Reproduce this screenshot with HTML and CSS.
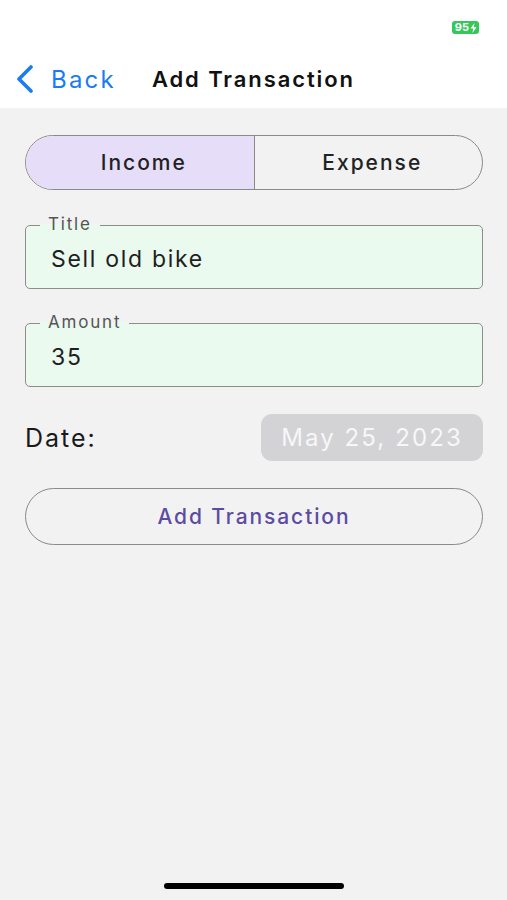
FILE: index.html
```html
<!DOCTYPE html>
<html>
<head>
  <meta charset="utf-8" />
  <title>Add Transaction</title>
  <link rel="stylesheet" href="styles.css">
</head>
<body>
  <div class="topbar">
    <div class="status">
      <span class="battery">95<svg width="7" height="10" viewBox="0 0 7 10"><path d="M4.5 0 L0.5 5.6 H3.2 L2.4 10 L6.5 4.2 H3.8 Z" fill="#fff"/></svg></span>
    </div>
    <div class="nav">
      <a class="back">
        <svg width="22" height="28" viewBox="0 0 22 28"><path d="M17 2 L5 14 L17 26" fill="none" stroke="#1a7cf0" stroke-width="3.6" stroke-linecap="round" stroke-linejoin="round"/></svg>
        <span>Back</span>
      </a>
      <span class="nav-title">Add Transaction</span>
    </div>
  </div>

  <div class="content">
    <div class="segment">
      <div class="seg-item active">Income</div>
      <div class="seg-item">Expense</div>
    </div>

    <div class="field">
      <span class="field-label">Title</span>
      <span class="field-value">Sell old bike</span>
    </div>

    <div class="field">
      <span class="field-label">Amount</span>
      <span class="field-value">35</span>
    </div>

    <div class="date-row">
      <span class="date-label">Date:</span>
      <span class="date-pill">May 25, 2023</span>
    </div>

    <button class="add-btn">Add Transaction</button>
  </div>

  <div class="home-bar"></div>
</body>
</html>
```

FILE: styles.css
```css
body {
  margin: 0;
  width: 507px;
  height: 900px;
  background-color: #f2f2f2;
  font-family: Inter, "Noto Sans", sans-serif;
  color: #1c1c1c;
  position: relative;
  overflow: hidden;
}

.topbar {
  background-color: #fff;
  height: 108px;
}

.status {
  height: 50px;
  display: flex;
  justify-content: flex-end;
  align-items: flex-start;
  padding-right: 28px;
}

.battery {
  margin-top: 21px;
  background-color: #34c759;
  color: #fff;
  font-size: 11px;
  font-weight: 700;
  line-height: 13px;
  height: 13px;
  padding: 0 2px 0 3px;
  border-radius: 3px;
  display: flex;
  align-items: center;
  gap: 1px;
}

.nav {
  display: flex;
  align-items: center;
  height: 58px;
  padding-left: 14px;
}

.back {
  display: flex;
  align-items: center;
  color: #1a7cf0;
  font-size: 24px;
  letter-spacing: 2.2px;
  gap: 15px;
}

.nav-title {
  margin-left: 36px;
  font-size: 22px;
  font-weight: 600;
  letter-spacing: 1.9px;
  color: #111;
}

.content {
  padding: 27px 24px 0 25px;
}

.segment {
  display: flex;
  height: 55px;
  border: 1.5px solid #8a8a8a;
  border-radius: 28px;
  overflow: hidden;
  box-sizing: border-box;
}

.seg-item {
  flex: 1;
  display: flex;
  align-items: center;
  justify-content: center;
  padding-left: 8px;
  font-size: 21px;
  font-weight: 500;
  letter-spacing: 2px;
  color: #222;
}

.seg-item.active {
  background-color: #e6def8;
  border-right: 1.5px solid #8a8a8a;
}

.field {
  position: relative;
  margin-top: 35px;
  height: 64px;
  box-sizing: border-box;
  border: 1.5px solid #8d8d8d;
  border-radius: 5px;
  background-color: #eafaee;
  display: flex;
  align-items: center;
  padding-left: 25px;
  padding-top: 4px;
}

.field + .field {
  margin-top: 34px;
}

.field-label {
  position: absolute;
  top: -12px;
  left: 14px;
  padding: 0 8px;
  font-size: 17px;
  line-height: 20px;
  letter-spacing: 1.8px;
  color: #555;
  background: linear-gradient(to bottom, #f2f2f2 50%, #eafaee 50%);
}

.field-value {
  font-size: 23px;
  letter-spacing: 1.7px;
  color: #1f1f1f;
}

.date-row {
  margin-top: 27px;
  display: flex;
  justify-content: space-between;
  align-items: center;
}

.date-label {
  font-size: 25px;
  letter-spacing: 2px;
  color: #1a1a1a;
}

.date-pill {
  background-color: #d3d3d6;
  border-radius: 11px;
  height: 47px;
  width: 222px;
  display: flex;
  align-items: center;
  justify-content: center;
  font-size: 24px;
  letter-spacing: 2.1px;
  color: #f7f7f7;
}

.add-btn {
  margin-top: 27px;
  width: 100%;
  height: 57px;
  border: 1.5px solid #8a8a8a;
  border-radius: 29px;
  background: transparent;
  font-family: inherit;
  font-size: 21px;
  font-weight: 500;
  letter-spacing: 1.9px;
  color: #5c4ba3;
}

.home-bar {
  position: absolute;
  left: 164px;
  top: 883px;
  width: 180px;
  height: 6px;
  border-radius: 3px;
  background-color: #000;
}
```
